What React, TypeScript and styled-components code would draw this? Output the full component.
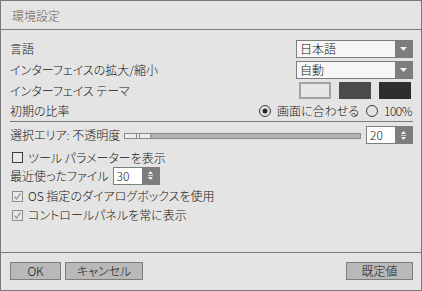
import styled, { createGlobalStyle } from "styled-components"

const GlobalStyle = createGlobalStyle`
  html, body {
    margin: 0;
    padding: 0;
    background: #e4e4e4;
  }
`

const Window = styled.div`
  width: 422px;
  height: 291px;
  box-sizing: border-box;
  border: 1px solid #7a7a7a;
  background: #e4e4e4;
  display: flex;
  flex-direction: column;
  font-family: "Noto Sans CJK JP", sans-serif;
  font-feature-settings: "palt";
  font-weight: 300;
  font-size: 12px;
  color: #151515;
`
const TitleBar = styled.div`
  height: 28px;
  flex: none;
  display: flex;
  align-items: center;
  padding-left: 11px;
  border-bottom: 1px solid #7a7a7a;
  color: #6a5d54;
  font-size: 12px;
`
const Content = styled.div`
  flex: 1;
  display: flex;
  flex-direction: column;
  padding: 8px 8px 0 9px;
`
interface RowProps {
  h: number
  mt?: number
}
const Row = styled.div<RowProps>`
  display: flex;
  align-items: center;
  justify-content: space-between;
  height: ${props => `${props.h}px`};
  margin-top: ${props => `${props.mt || 0}px`};
  white-space: nowrap;
`
const Label = styled.span`
  line-height: 1;
`
const Divider = styled.div`
  height: 1px;
  background: #7a7a7a;
`

const Select = styled.div`
  width: 117px;
  height: 18px;
  box-sizing: border-box;
  border: 1px solid #7d7d7d;
  background: #f6f6f6;
  display: flex;
  align-items: center;
`
const SelectText = styled.span`
  flex: 1;
  padding-left: 3px;
  line-height: 1;
  font-size: 12px;
`
const SelectArrow = styled.div`
  width: 17px;
  height: 100%;
  background: #7d7d7d;
  display: flex;
  align-items: center;
  justify-content: center;
`

const Swatches = styled.div`
  display: flex;
  gap: 8px;
  margin-right: 2px;
`
interface SwatchProps {
  color: string
  selected?: boolean
}
const Swatch = styled.div<SwatchProps>`
  width: 32px;
  height: 17px;
  box-sizing: border-box;
  background: ${props => props.color};
  border: ${props => (props.selected ? "2px solid #a2a2a2" : "none")};
`

const RadioGroup = styled.div`
  display: flex;
  align-items: center;
  margin-right: 1px;
`
const RadioLabel = styled.label<{ small?: boolean }>`
  display: flex;
  align-items: center;
  gap: 6px;
  margin-left: ${props => (props.small ? "7px" : "0")};
  letter-spacing: ${props => (props.small ? "-0.5px" : "0")};
  line-height: 1;
`

const SliderRow = styled.div`
  flex: 1;
  display: flex;
  align-items: center;
  margin: 0 5px 0 4px;
`
const SliderTrack = styled.div`
  flex: 1;
  height: 6px;
  box-sizing: border-box;
  border: 1px solid #8a8a8a;
  background: #b5b5b5;
  display: flex;
  margin-top: 1px;
`
const SliderThumb = styled.div`
  width: 25px;
  height: 100%;
  background: #ededed;
  border-right: 1px solid #8a8a8a;
  display: flex;
  justify-content: center;
  gap: 2px;
  &::before,
  &::after {
    content: "";
    width: 1px;
    background: #8a8a8a;
  }
`

const Spin = styled.div`
  width: 47px;
  height: 18px;
  box-sizing: border-box;
  border: 1px solid #7d7d7d;
  background: #ffffff;
  display: flex;
  align-items: center;
`
const SpinValue = styled.span`
  flex: 1;
  padding-left: 3px;
  line-height: 1;
  font-size: 12px;
`
const SpinButton = styled.div`
  width: 17px;
  height: 100%;
  background: #7d7d7d;
  display: flex;
  align-items: center;
  justify-content: center;
`

const CheckRow = styled.label`
  display: flex;
  align-items: center;
  gap: 5px;
  padding-left: 2px;
  line-height: 1;
`
const FileRow = styled.div`
  display: flex;
  align-items: center;
  gap: 4px;
`

const Footer = styled.div`
  height: 38px;
  flex: none;
  box-sizing: border-box;
  border-top: 1px solid #7a7a7a;
  padding: 9px 8px 0 9px;
  display: flex;
  align-items: flex-start;
`
interface ButtonProps {
  width: number
}
const Button = styled.button<ButtonProps>`
  width: ${props => `${props.width}px`};
  height: 18px;
  box-sizing: border-box;
  border: 1px solid #7d7d7d;
  background: #b9b9b9;
  padding: 0;
  font-family: inherit;
  font-feature-settings: "palt";
  font-weight: 300;
  font-size: 12px;
  line-height: 1;
  color: #151515;
  margin-right: 4px;
  &:last-child {
    margin-right: 0;
    margin-left: auto;
  }
`

const DownArrow = () => (
  <svg width="7" height="4" viewBox="0 0 7 4">
    <path d="M0 0 H7 L3.5 4 Z" fill="#f2f2f2" />
  </svg>
)

const SpinArrows = () => (
  <svg width="7" height="11" viewBox="0 0 7 11">
    <path d="M1 4 H6 L3.5 1 Z" fill="#f2f2f2" />
    <rect x="1" y="5" width="5" height="1" fill="#cfcfcf" />
    <path d="M1 7 H6 L3.5 10 Z" fill="#f2f2f2" />
  </svg>
)

const Radio = ({ checked }: { checked?: boolean }) => (
  <svg width="12" height="12" viewBox="0 0 12 12">
    <circle cx="6" cy="6" r="5.5" fill="none" stroke="#3c3c3c" strokeWidth="1" />
    {checked && <circle cx="6" cy="6" r="2.5" fill="#2a2a2a" />}
  </svg>
)

const Checkbox = ({ checked }: { checked?: boolean }) => (
  <svg width="11" height="11" viewBox="0 0 11 11">
    <rect
      x="0.5"
      y="0.5"
      width="10"
      height="10"
      fill="#e8e8e8"
      stroke={checked ? "#8d8d8d" : "#3c3c3c"}
    />
    {checked && (
      <path d="M2.5 5.5 L4.5 8 L8.5 2.5" fill="none" stroke="#8d8d8d" strokeWidth="1.2" />
    )}
  </svg>
)

const App = () => {
  return (
    <>
      <GlobalStyle />
      <Window>
        <TitleBar>環境設定</TitleBar>
        <Content>
          <Row h={21}>
            <Label>言語</Label>
            <Select>
              <SelectText>日本語</SelectText>
              <SelectArrow>
                <DownArrow />
              </SelectArrow>
            </Select>
          </Row>
          <Row h={21}>
            <Label>インターフェイスの拡大/縮小</Label>
            <Select>
              <SelectText>自動</SelectText>
              <SelectArrow>
                <DownArrow />
              </SelectArrow>
            </Select>
          </Row>
          <Row h={21}>
            <Label>インターフェイス テーマ</Label>
            <Swatches>
              <Swatch color="#e6e6e6" selected />
              <Swatch color="#4b4b4b" />
              <Swatch color="#2e2e2e" />
            </Swatches>
          </Row>
          <Row h={20}>
            <Label>初期の比率</Label>
            <RadioGroup>
              <RadioLabel>
                <Radio checked />
                画面に合わせる
              </RadioLabel>
              <RadioLabel small>
                <Radio />
                100%
              </RadioLabel>
            </RadioGroup>
          </Row>
          <Divider />
          <Row h={18} mt={4}>
            <Label>選択エリア: 不透明度</Label>
            <SliderRow>
              <SliderTrack>
                <SliderThumb />
              </SliderTrack>
            </SliderRow>
            <Spin>
              <SpinValue>20</SpinValue>
              <SpinButton>
                <SpinArrows />
              </SpinButton>
            </Spin>
          </Row>
          <Row h={19} mt={4}>
            <CheckRow>
              <Checkbox />
              ツール パラメーターを表示
            </CheckRow>
          </Row>
          <Row h={17}>
            <FileRow>
              <Label>最近使ったファイル</Label>
              <Spin>
                <SpinValue>30</SpinValue>
                <SpinButton>
                  <SpinArrows />
                </SpinButton>
              </Spin>
            </FileRow>
          </Row>
          <Row h={20} mt={2}>
            <CheckRow>
              <Checkbox checked />
              OS 指定のダイアログボックスを使用
            </CheckRow>
          </Row>
          <Row h={18}>
            <CheckRow>
              <Checkbox checked />
              コントロールパネルを常に表示
            </CheckRow>
          </Row>
        </Content>
        <Footer>
          <Button width={51}>OK</Button>
          <Button width={78}>キャンセル</Button>
          <Button width={67}>既定値</Button>
        </Footer>
      </Window>
    </>
  )
}

export default App
